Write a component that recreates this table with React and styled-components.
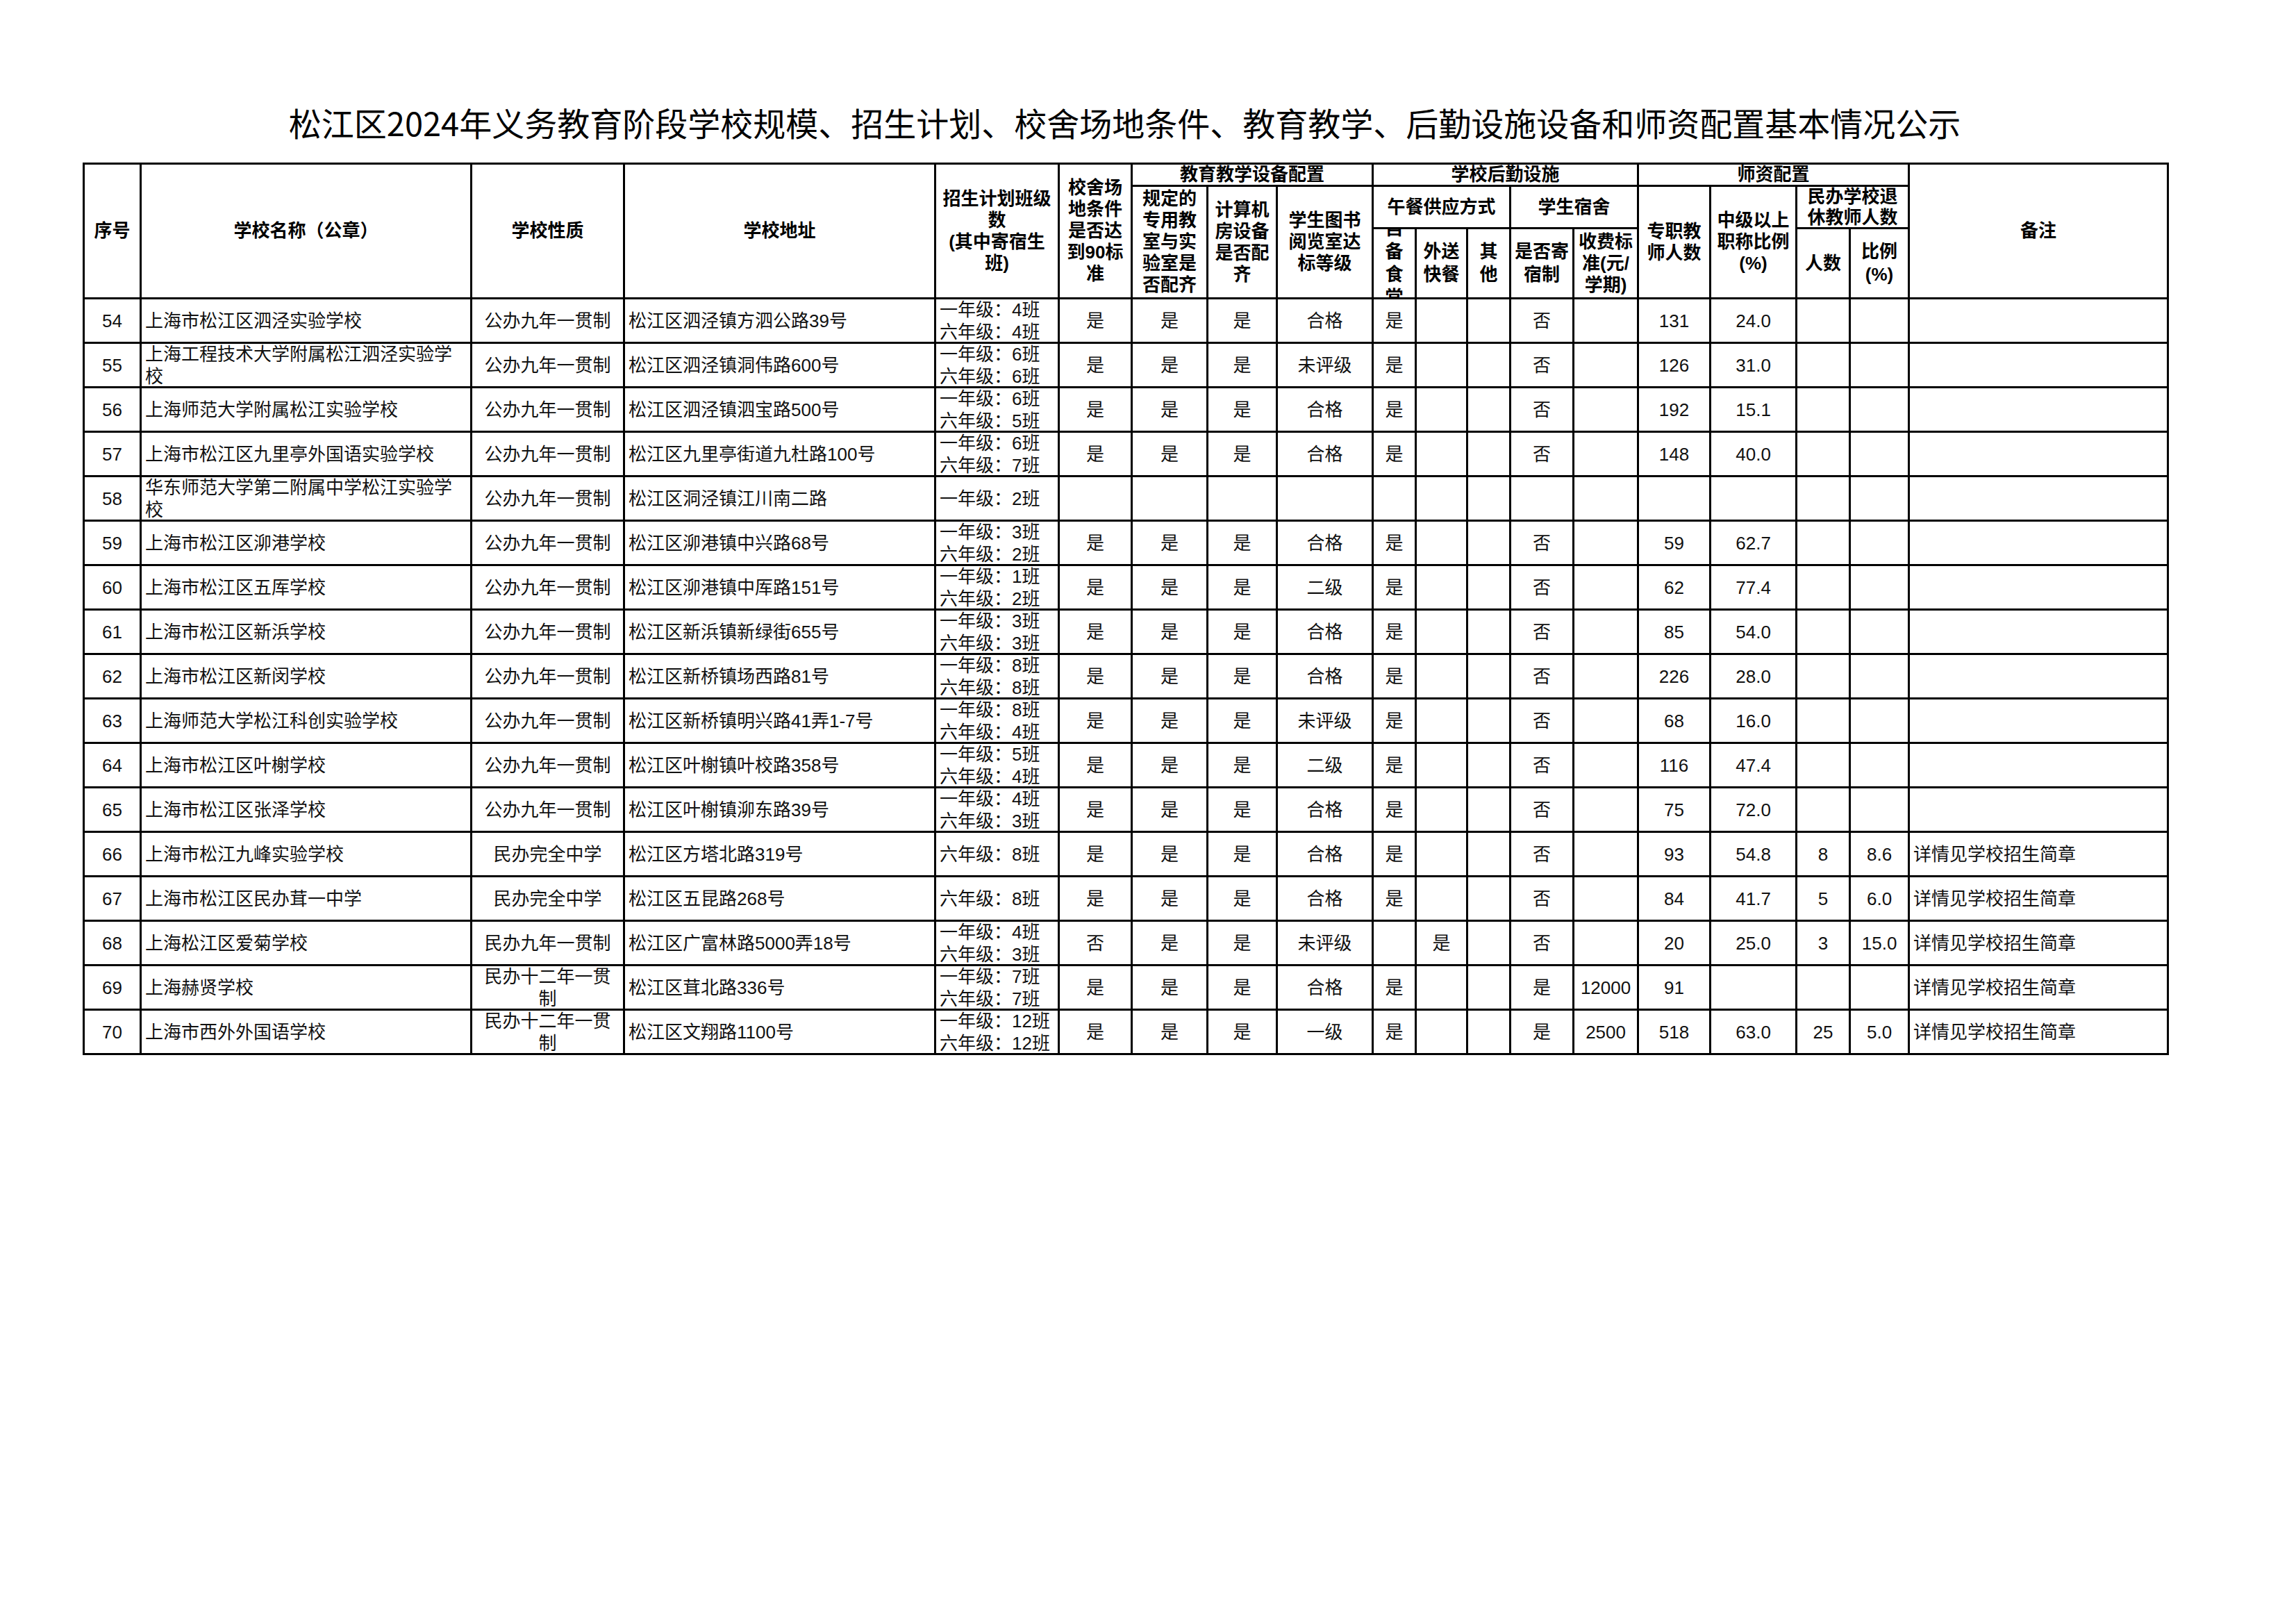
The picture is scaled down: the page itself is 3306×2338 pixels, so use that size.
import styled, { createGlobalStyle } from "styled-components";

const GlobalStyle = createGlobalStyle`
  html, body {
    margin: 0;
    padding: 0;
    background: #ffffff;
  }
  body {
    font-family: "Liberation Sans", "Noto Sans CJK SC", sans-serif;
    color: #000;
  }
`;

// column widths measured off the reference (px)
const COLS = [82, 476, 220, 448, 178, 105, 109, 100, 138, 62, 74, 62, 91, 93, 104, 124, 77, 85, 373];
const TABLE_W = COLS.reduce((a, b) => a + b, 0);
const ALIGN = [
  "center", "left", "center", "left", "left",
  "center", "center", "center", "center", "center", "center", "center", "center", "center",
  "center", "center", "center", "center", "left",
];

const NOTE = "详情见学校招生简章";

const pub = (no, name, addr, grades, rating, teachers, ratio) => [
  no, name, "公办九年一贯制", addr, grades,
  "是", "是", "是", rating, "是", "", "", "否", "",
  teachers, ratio, "", "", "",
];

const rows = [
  pub("54", "上海市松江区泗泾实验学校", "松江区泗泾镇方泗公路39号", ["一年级：4班", "六年级：4班"], "合格", "131", "24.0"),
  pub("55", "上海工程技术大学附属松江泗泾实验学校", "松江区泗泾镇洞伟路600号", ["一年级：6班", "六年级：6班"], "未评级", "126", "31.0"),
  pub("56", "上海师范大学附属松江实验学校", "松江区泗泾镇泗宝路500号", ["一年级：6班", "六年级：5班"], "合格", "192", "15.1"),
  pub("57", "上海市松江区九里亭外国语实验学校", "松江区九里亭街道九杜路100号", ["一年级：6班", "六年级：7班"], "合格", "148", "40.0"),
  ["58", "华东师范大学第二附属中学松江实验学校", "公办九年一贯制", "松江区洞泾镇江川南二路", ["一年级：2班"],
    "", "", "", "", "", "", "", "", "", "", "", "", "", ""],
  pub("59", "上海市松江区泖港学校", "松江区泖港镇中兴路68号", ["一年级：3班", "六年级：2班"], "合格", "59", "62.7"),
  pub("60", "上海市松江区五厍学校", "松江区泖港镇中厍路151号", ["一年级：1班", "六年级：2班"], "二级", "62", "77.4"),
  pub("61", "上海市松江区新浜学校", "松江区新浜镇新绿街655号", ["一年级：3班", "六年级：3班"], "合格", "85", "54.0"),
  pub("62", "上海市松江区新闵学校", "松江区新桥镇场西路81号", ["一年级：8班", "六年级：8班"], "合格", "226", "28.0"),
  pub("63", "上海师范大学松江科创实验学校", "松江区新桥镇明兴路41弄1-7号", ["一年级：8班", "六年级：4班"], "未评级", "68", "16.0"),
  pub("64", "上海市松江区叶榭学校", "松江区叶榭镇叶校路358号", ["一年级：5班", "六年级：4班"], "二级", "116", "47.4"),
  pub("65", "上海市松江区张泽学校", "松江区叶榭镇泖东路39号", ["一年级：4班", "六年级：3班"], "合格", "75", "72.0"),
  ["66", "上海市松江九峰实验学校", "民办完全中学", "松江区方塔北路319号", ["六年级：8班"],
    "是", "是", "是", "合格", "是", "", "", "否", "", "93", "54.8", "8", "8.6", NOTE],
  ["67", "上海市松江区民办茸一中学", "民办完全中学", "松江区五昆路268号", ["六年级：8班"],
    "是", "是", "是", "合格", "是", "", "", "否", "", "84", "41.7", "5", "6.0", NOTE],
  ["68", "上海松江区爱菊学校", "民办九年一贯制", "松江区广富林路5000弄18号", ["一年级：4班", "六年级：3班"],
    "否", "是", "是", "未评级", "", "是", "", "否", "", "20", "25.0", "3", "15.0", NOTE],
  ["69", "上海赫贤学校", "民办十二年一贯制", "松江区茸北路336号", ["一年级：7班", "六年级：7班"],
    "是", "是", "是", "合格", "是", "", "", "是", "12000", "91", "", "", "", NOTE],
  ["70", "上海市西外外国语学校", "民办十二年一贯制", "松江区文翔路1100号", ["一年级：12班", "六年级：12班"],
    "是", "是", "是", "一级", "是", "", "", "是", "2500", "518", "63.0", "25", "5.0", NOTE],
];

const lines = (...parts) =>
  parts.map((p, i) => (
    <span key={i}>
      {i > 0 && <br />}
      {p}
    </span>
  ));

// header cell that sits in a single header row, so it has a fixed height
function Head({ h, lh, colSpan, children }) {
  return (
    <Th colSpan={colSpan}>
      <HeadBox $h={h} $lh={lh}>
        <HeadText>{children}</HeadText>
      </HeadBox>
    </Th>
  );
}

export default function App() {
  return (
    <Page>
      <GlobalStyle />
      <Sheet>
        <Title>松江区2024年义务教育阶段学校规模、招生计划、校舍场地条件、教育教学、后勤设施设备和师资配置基本情况公示</Title>
        <Table>
          <colgroup>
            {COLS.map((w, i) => (
              <Col key={i} $w={w} />
            ))}
          </colgroup>
          <thead>
            <tr>
              <Th rowSpan={3}>序号</Th>
              <Th rowSpan={3}>学校名称（公章）</Th>
              <Th rowSpan={3}>学校性质</Th>
              <Th rowSpan={3}>学校地址</Th>
              <Th rowSpan={3}>{lines("招生计划班级", "数", "(其中寄宿生", "班)")}</Th>
              <Th rowSpan={3}>{lines("校舍场", "地条件", "是否达", "到90标", "准")}</Th>
              <Head h={29} colSpan={3}>教育教学设备配置</Head>
              <Head h={29} colSpan={5}>学校后勤设施</Head>
              <Head h={29} colSpan={4}>师资配置</Head>
              <Th rowSpan={3}>备注</Th>
            </tr>
            <tr>
              <Th rowSpan={2}>{lines("规定的", "专用教", "室与实", "验室是", "否配齐")}</Th>
              <Th rowSpan={2}>{lines("计算机", "房设备", "是否配", "齐")}</Th>
              <Th rowSpan={2}>{lines("学生图书", "阅览室达", "标等级")}</Th>
              <Head h={58} colSpan={3}>午餐供应方式</Head>
              <Head h={58} colSpan={2}>学生宿舍</Head>
              <Th rowSpan={2}>{lines("专职教", "师人数")}</Th>
              <Th rowSpan={2}>{lines("中级以上", "职称比例", "(%)")}</Th>
              <Head h={58} lh={30} colSpan={2}>{lines("民办学校退", "休教师人数")}</Head>
            </tr>
            <tr>
              <Head h={98} lh={33}>{lines("自", "备", "食", "堂")}</Head>
              <Head h={98} lh={33}>{lines("外送", "快餐")}</Head>
              <Head h={98} lh={33}>{lines("其", "他")}</Head>
              <Head h={98} lh={33}>{lines("是否寄", "宿制")}</Head>
              <Head h={98}>{lines("收费标", "准(元/", "学期)")}</Head>
              <Head h={98}>人数</Head>
              <Head h={98} lh={33}>{lines("比例", "(%)")}</Head>
            </tr>
          </thead>
          <tbody>
            {rows.map((row) => (
              <tr key={row[0]}>
                {row.map((cell, i) => (
                  <Td key={i}>
                    <CellBox $align={ALIGN[i]}>
                      <CellText $align={ALIGN[i]}>
                        {Array.isArray(cell) ? lines(...cell) : cell}
                      </CellText>
                    </CellBox>
                  </Td>
                ))}
              </tr>
            ))}
          </tbody>
        </Table>
      </Sheet>
    </Page>
  );
}

const Page = styled.div`
  width: 3306px;
  min-height: 2338px;
  padding: 152px 0 0 119px;
  box-sizing: border-box;
  background: #fff;
`;

const Sheet = styled.div`
  width: ${TABLE_W}px;
  display: flex;
  flex-direction: column;
`;

const Title = styled.h1`
  margin: 0 0 35px;
  font-family: "Noto Sans CJK SC", sans-serif;
  font-size: 47px;
  line-height: 47px;
  font-weight: 400;
  text-align: center;
  white-space: nowrap;
  color: #000;
`;

const Table = styled.table`
  width: ${TABLE_W}px;
  border-collapse: collapse;
  table-layout: fixed;
`;

const Col = styled.col`
  width: ${(p) => p.$w}px;
`;

const Th = styled.th`
  border: 3px solid #000;
  padding: 0 4px;
  font-family: "Liberation Sans", "Noto Sans CJK SC", sans-serif;
  font-size: 26px;
  line-height: 31px;
  font-weight: 700;
  text-align: center;
  vertical-align: middle;
  color: #000;
`;

const HeadBox = styled.div`
  height: ${(p) => p.$h}px;
  line-height: ${(p) => p.$lh || 31}px;
  display: flex;
  align-items: center;
  justify-content: center;
  overflow: hidden;
  margin: 0 -4px;
`;

const HeadText = styled.div`
  text-align: center;
  white-space: nowrap;
`;

const Td = styled.td`
  border: 3px solid #000;
  padding: 0;
  vertical-align: middle;
`;

const CellBox = styled.div`
  height: 61px;
  display: flex;
  align-items: center;
  justify-content: ${(p) => (p.$align === "left" ? "flex-start" : "center")};
  padding: 0 5px;
  overflow: hidden;
  font-size: 26px;
  line-height: 32px;
  color: #111;
`;

const CellText = styled.div`
  text-align: ${(p) => p.$align};
  min-width: 0;
`;
